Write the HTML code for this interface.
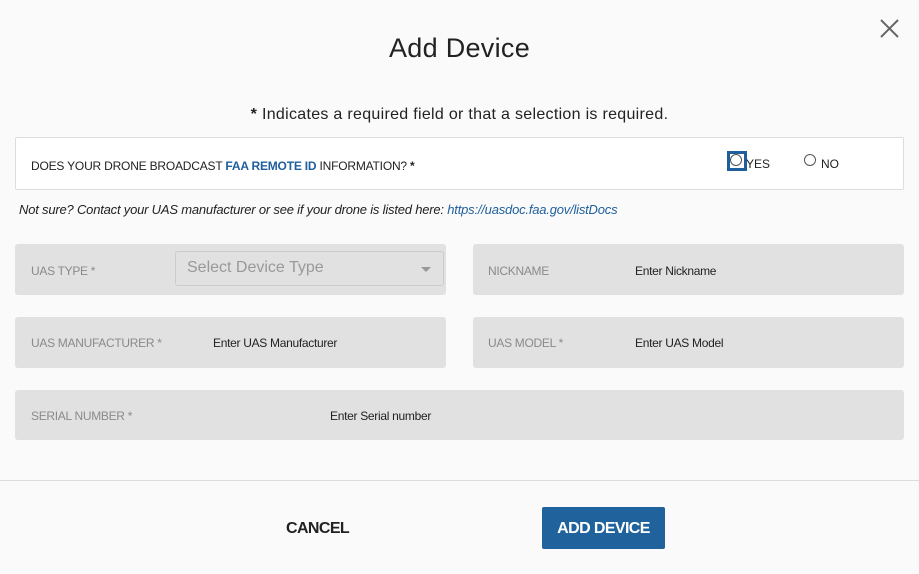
<!DOCTYPE html>
<html><head><style>
*{margin:0;padding:0;box-sizing:border-box}
body{width:919px;height:574px;background:#fafafa;font-family:"Liberation Sans",sans-serif;position:relative;overflow:hidden;color:#222}
.a{position:absolute}
.box{position:absolute;background:#e1e1e1;border-radius:3px}
.lbl{position:absolute;font-size:12px;color:#8a8a8a;letter-spacing:-0.3px}
.ph{position:absolute;font-size:12px;color:#222;letter-spacing:-0.3px}
</style></head><body>
<div class="a" style="left:0;top:33px;width:919px;text-align:center;font-size:27px;color:#222;letter-spacing:0.3px">Add Device</div>
<svg class="a" style="left:880px;top:19px" width="19" height="19"><path d="M1 1L18 18M18 1L1 18" stroke="#666" stroke-width="2"/></svg>
<div class="a" style="left:0;top:106px;width:919px;text-align:center;font-size:16px;color:#222;letter-spacing:0.3px"><b>*</b> Indicates a required field or that a selection is required.</div>
<div class="a" style="left:15px;top:137px;width:889px;height:53px;background:#fff;border:1px solid #ddd;border-radius:2px"></div>
<div class="a" style="left:31px;top:159px;font-size:12px;color:#222;letter-spacing:-0.2px">DOES YOUR DRONE BROADCAST <b style="color:#1f5f9c">FAA REMOTE ID</b> INFORMATION? <b>*</b></div>
<div class="a" style="left:727px;top:151px;width:20px;height:20px;border:3px solid #1f5f9c"></div>
<div class="a" style="left:730px;top:154px;width:12px;height:12px;border:1px solid #555;border-radius:50%;background:#fff"></div>
<div class="a" style="left:746px;top:157px;font-size:12px;color:#222">YES</div>
<div class="a" style="left:804px;top:154px;width:12px;height:12px;border:1px solid #555;border-radius:50%;background:#fff"></div>
<div class="a" style="left:821px;top:157px;font-size:12px;color:#222">NO</div>
<div class="a" style="left:19px;top:202px;font-size:13px;font-style:italic;color:#222;letter-spacing:-0.2px">Not sure? Contact your UAS manufacturer or see if your drone is listed here: <span style="color:#1f5f9c">https://uasdoc.faa.gov/listDocs</span></div>
<div class="box" style="left:15px;top:244px;width:431px;height:51px"></div>
<div class="lbl" style="left:31px;top:264px">UAS TYPE *</div>
<div class="a" style="left:175px;top:251px;width:269px;height:35px;border:1px solid #ccc;border-radius:3px"></div>
<div class="a" style="left:187px;top:259px;font-size:16px;color:#999">Select Device Type</div>
<div class="a" style="left:421px;top:267px;border-left:5px solid transparent;border-right:5px solid transparent;border-top:5px solid #999"></div>
<div class="box" style="left:473px;top:244px;width:431px;height:51px"></div>
<div class="lbl" style="left:488px;top:264px">NICKNAME</div>
<div class="ph" style="left:635px;top:264px">Enter Nickname</div>
<div class="box" style="left:15px;top:317px;width:431px;height:51px"></div>
<div class="lbl" style="left:31px;top:336px">UAS MANUFACTURER *</div>
<div class="ph" style="left:213px;top:336px">Enter UAS Manufacturer</div>
<div class="box" style="left:473px;top:317px;width:431px;height:51px"></div>
<div class="lbl" style="left:488px;top:336px">UAS MODEL *</div>
<div class="ph" style="left:635px;top:336px">Enter UAS Model</div>
<div class="box" style="left:15px;top:390px;width:889px;height:50px"></div>
<div class="lbl" style="left:31px;top:409px">SERIAL NUMBER *</div>
<div class="ph" style="left:330px;top:409px">Enter Serial number</div>
<div class="a" style="left:0;top:480px;width:919px;height:1px;background:#ddd"></div>
<div class="a" style="left:286px;top:520px;font-size:16px;font-weight:bold;color:#222;letter-spacing:-0.6px">CANCEL</div>
<div class="a" style="left:542px;top:507px;width:123px;height:42px;background:#1f629c;border-radius:2px;color:#fff;font-size:16px;font-weight:bold;text-align:center;line-height:44px;letter-spacing:-0.6px">ADD DEVICE</div>
</body></html>
